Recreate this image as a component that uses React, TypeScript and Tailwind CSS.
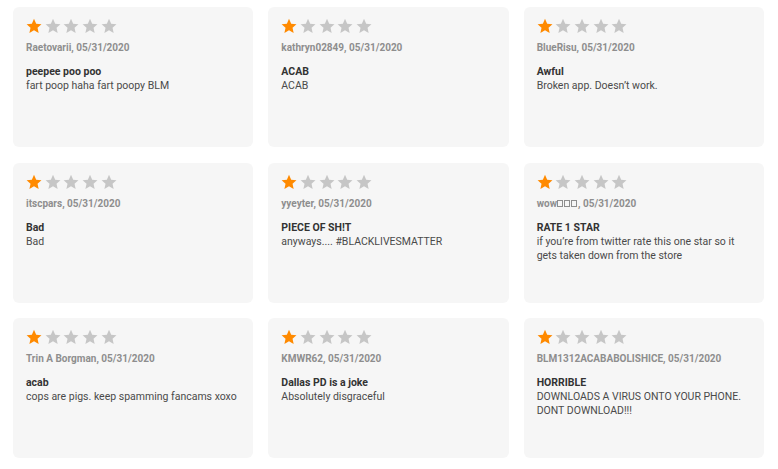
import React from "react";

type Review = { author: React.ReactNode; title: string; body: string };

function Tofu() {
  return <span className="inline-block w-[6px] h-[7px] border border-[#8e8e8e] mr-[1px] align-[-0.5px]" />;
}

const reviews: Review[] = [
  { author: "Raetovarii", title: "peepee poo poo", body: "fart poop haha fart poopy BLM" },
  { author: "kathryn02849", title: "ACAB", body: "ACAB" },
  { author: "BlueRisu", title: "Awful", body: "Broken app. Doesn\u2019t work." },
  { author: "itscpars", title: "Bad", body: "Bad" },
  { author: "yyeyter", title: "PIECE OF SH!T", body: "anyways.... #BLACKLIVESMATTER" },
  {
    author: (
      <>
        wow
        <Tofu />
        <Tofu />
        <Tofu />
      </>
    ),
    title: "RATE 1 STAR",
    body: "if you\u2019re from twitter rate this one star so it gets taken down from the store",
  },
  { author: "Trin A Borgman", title: "acab", body: "cops are pigs. keep spamming fancams xoxo" },
  { author: "KMWR62", title: "Dallas PD is a joke", body: "Absolutely disgraceful" },
  { author: "BLM1312ACABABOLISHICE", title: "HORRIBLE", body: "DOWNLOADS A VIRUS ONTO YOUR PHONE. DONT DOWNLOAD!!!" },
];

function Star({ filled }: { filled: boolean }) {
  return (
    <svg width="16" height="16" viewBox="0 0 24 23" className="shrink-0">
      <path
        d="M12 0.8l3.3 7.2 7.9 0.8-5.9 5.3 1.7 7.8L12 17.9l-6.9 4 1.7-7.8L0.9 8.8l7.9-0.8z"
        fill={filled ? "#ff8a00" : "#c6c6c6"}
      />
    </svg>
  );
}

function Card({ r }: { r: Review }) {
  return (
    <div className="h-[140px] rounded-[6px] bg-[#f6f6f6] px-[13px] pt-[11px]">
      <div className="flex gap-[2.7px]">
        {[0, 1, 2, 3, 4].map((i) => (
          <Star key={i} filled={i === 0} />
        ))}
      </div>
      <div className="mt-[7px] text-[10px] font-bold leading-[14px] text-[#8e8e8e]">
        {r.author}, 05/31/2020
      </div>
      <div className="mt-[10px] text-[10.5px] font-bold leading-[14px] text-[#333333]">{r.title}</div>
      <div className="text-[10.5px] leading-[14px] text-[#4a4a4a]">{r.body}</div>
    </div>
  );
}

export default function App() {
  return (
    <div
      className="w-[778px] h-[469px] bg-white pl-[13px] pr-[14px] pt-[7px]"
      style={{ fontFamily: 'Roboto, "Liberation Sans", Arial, sans-serif' }}
    >
      <div className="grid grid-cols-3 gap-x-[15px] gap-y-[15.5px]">
        {reviews.map((r, i) => (
          <Card key={i} r={r} />
        ))}
      </div>
    </div>
  );
}
